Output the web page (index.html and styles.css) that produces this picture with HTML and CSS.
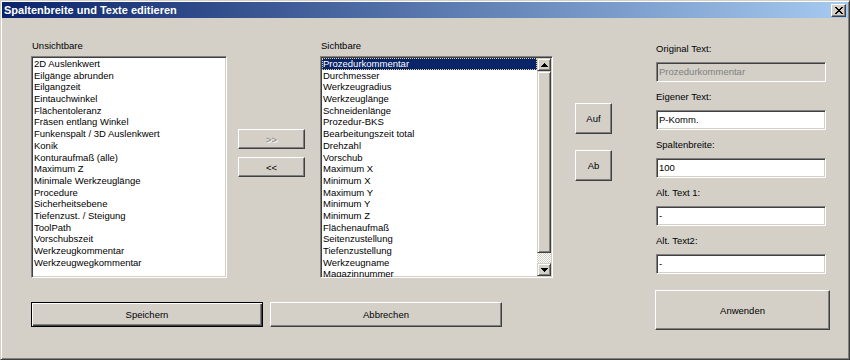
FILE: index.html
```html
<!DOCTYPE html>
<html lang="de">
<head>
<meta charset="utf-8">
<title>Spaltenbreite und Texte editieren</title>
<link rel="stylesheet" href="styles.css">
</head>
<body>
<div class="window">
  <div class="titlebar">
    <span class="title">Spaltenbreite und Texte editieren</span>
    <button class="close" aria-label="Schließen">
      <svg width="8" height="7" viewBox="0 0 8 7" shape-rendering="crispEdges">
        <path d="M0 0h2v1H0zM1 1h2v1H1zM2 2h4v1H2zM3 3h2v1H3zM2 4h4v1H2zM1 5h2v1H1zM0 6h2v1H0zM6 0h2v1H6zM5 1h2v1H5zM5 5h2v1H5zM6 6h2v1H6z" fill="#000"/>
      </svg>
    </button>
  </div>
  <div class="content">
    <div class="main">
      <div class="lists">
        <div class="col col-left">
          <div class="label">Unsichtbare</div>
          <div class="listbox">
            <ul class="items">
              <li>2D Auslenkwert</li>
              <li>Eilgänge abrunden</li>
              <li>Eilgangzeit</li>
              <li>Eintauchwinkel</li>
              <li>Flächentoleranz</li>
              <li>Fräsen entlang Winkel</li>
              <li>Funkenspalt / 3D Auslenkwert</li>
              <li>Konik</li>
              <li>Konturaufmaß (alle)</li>
              <li>Maximum Z</li>
              <li>Minimale Werkzeuglänge</li>
              <li>Procedure</li>
              <li>Sicherheitsebene</li>
              <li>Tiefenzust. / Steigung</li>
              <li>ToolPath</li>
              <li>Vorschubszeit</li>
              <li>Werkzeugkommentar</li>
              <li>Werkzeugwegkommentar</li>
            </ul>
          </div>
        </div>
        <div class="col col-arrows">
          <button class="btn btn-arrow" disabled>&gt;&gt;</button>
          <button class="btn btn-arrow">&lt;&lt;</button>
        </div>
        <div class="col col-mid">
          <div class="label">Sichtbare</div>
          <div class="listbox listbox-scroll">
            <ul class="items">
              <li class="selected">Prozedurkommentar</li>
              <li>Durchmesser</li>
              <li>Werkzeugradius</li>
              <li>Werkzeuglänge</li>
              <li>Schneidenlänge</li>
              <li>Prozedur-BKS</li>
              <li>Bearbeitungszeit total</li>
              <li>Drehzahl</li>
              <li>Vorschub</li>
              <li>Maximum X</li>
              <li>Minimum X</li>
              <li>Maximum Y</li>
              <li>Minimum Y</li>
              <li>Minimum Z</li>
              <li>Flächenaufmaß</li>
              <li>Seitenzustellung</li>
              <li>Tiefenzustellung</li>
              <li>Werkzeugname</li>
              <li>Magazinnummer</li>
            </ul>
            <div class="scrollbar">
              <div class="sb-btn">
                <svg width="7" height="4" viewBox="0 0 7 4" shape-rendering="crispEdges"><path d="M3 0h1v1H3zM2 1h3v1H2zM1 2h5v1H1zM0 3h7v1H0z" fill="#000"/></svg>
              </div>
              <div class="sb-thumb"></div>
              <div class="sb-track"></div>
              <div class="sb-btn">
                <svg width="7" height="4" viewBox="0 0 7 4" shape-rendering="crispEdges"><path d="M0 0h7v1H0zM1 1h5v1H1zM2 2h3v1H2zM3 3h1v1H3z" fill="#000"/></svg>
              </div>
            </div>
          </div>
        </div>
        <div class="col col-order">
          <button class="btn btn-order">Auf</button>
          <button class="btn btn-order">Ab</button>
        </div>
      </div>
      <div class="actions">
        <button class="btn btn-wide btn-default">Speichern</button>
        <button class="btn btn-wide">Abbrechen</button>
      </div>
    </div>
    <div class="side">
      <div class="field">
        <div class="label">Original Text:</div>
        <div class="input input-disabled">Prozedurkommentar</div>
      </div>
      <div class="field">
        <div class="label">Eigener Text:</div>
        <div class="input">P-Komm.</div>
      </div>
      <div class="field">
        <div class="label">Spaltenbreite:</div>
        <div class="input">100</div>
      </div>
      <div class="field">
        <div class="label">Alt. Text 1:</div>
        <div class="input">-</div>
      </div>
      <div class="field">
        <div class="label">Alt. Text2:</div>
        <div class="input">-</div>
      </div>
      <button class="btn btn-apply">Anwenden</button>
    </div>
  </div>
</div>
</body>
</html>
```

FILE: styles.css
```css
* { box-sizing: border-box; }

html, body {
  margin: 0;
  padding: 0;
  background: #D4D0C8;
}

body {
  font-family: "Liberation Sans", Arial, sans-serif;
  font-size: 9.5px;
  color: #000;
}

.window {
  width: 850px;
  height: 360px;
  background: #D4D0C8;
  border: 1px solid;
  border-color: #D4D0C8 #404040 #404040 #D4D0C8;
  box-shadow: inset 1px 1px #fff, inset -1px -1px #808080;
  padding: 1px;
}

.titlebar {
  height: 16px;
  background: linear-gradient(to right, #0A246A, #A6CAF0);
  display: flex;
  align-items: center;
  justify-content: space-between;
  padding-left: 2px;
  padding-right: 2px;
}

.title {
  color: #fff;
  font-weight: bold;
  font-size: 11px;
  line-height: 16px;
}

.close {
  width: 15px;
  height: 13px;
  padding: 0;
  margin: 0;
  background: #D4D0C8;
  border: 1px solid;
  border-color: #fff #404040 #404040 #fff;
  box-shadow: inset -1px -1px #808080;
  display: flex;
  align-items: center;
  justify-content: center;
}

.close svg { display: block; }

.content {
  display: flex;
  align-items: flex-start;
  padding-left: 29px;
}

.main {
  display: flex;
  flex-direction: column;
}

.lists {
  display: flex;
  align-items: flex-start;
}

.col {
  display: flex;
  flex-direction: column;
}

.label {
  line-height: 12px;
  height: 12px;
  white-space: nowrap;
}

.col-left {
  width: 196px;
  padding-top: 22px;
}

.col-left .label,
.col-mid .label {
  margin-bottom: 4px;
  padding-left: 1px;
}

.listbox {
  height: 222px;
  background: #fff;
  border: 1px solid;
  border-color: #808080 #fff #fff #808080;
  box-shadow: inset 1px 1px #404040, inset -1px -1px #D4D0C8;
  padding: 1px;
  overflow: hidden;
}

.items {
  list-style: none;
  margin: 0;
  padding: 0;
  flex: 1;
  min-width: 0;
}

.items li {
  height: 11.7px;
  line-height: 11.7px;
  padding-left: 1px;
  white-space: nowrap;
  overflow: hidden;
}

.items li.selected {
  background: #0A246A;
  color: #fff;
  outline: 1px dotted #E8D48A;
  outline-offset: -1px;
}

.col-arrows {
  width: 67px;
  margin-left: 11px;
  padding-top: 111px;
  gap: 8px;
}

.col-mid {
  width: 233px;
  margin-left: 15px;
  padding-top: 22px;
}

.listbox-scroll {
  display: flex;
}

.scrollbar {
  width: 14px;
  display: flex;
  flex-direction: column;
  flex: none;
}

.sb-btn {
  height: 13px;
  flex: none;
  background: #D4D0C8;
  border: 1px solid;
  border-color: #D4D0C8 #404040 #404040 #D4D0C8;
  box-shadow: inset 1px 1px #fff, inset -1px -1px #808080;
  display: flex;
  align-items: center;
  justify-content: center;
}

.sb-btn svg { display: block; }

.sb-thumb {
  height: 182px;
  flex: none;
  background: #D4D0C8;
  border: 1px solid;
  border-color: #D4D0C8 #404040 #404040 #D4D0C8;
  box-shadow: inset 1px 1px #fff, inset -1px -1px #808080;
}

.sb-track {
  flex: 1;
  background: repeating-conic-gradient(#fff 0 25%, #D4D0C8 0 50%) 0 0 / 2px 2px;
}

.col-order {
  width: 37px;
  margin-left: 22px;
  padding-top: 85px;
  gap: 16px;
}

.btn {
  font-family: "Liberation Sans", Arial, sans-serif;
  font-size: 9.5px;
  color: #000;
  background: #D4D0C8;
  border: 1px solid;
  border-color: #fff #404040 #404040 #fff;
  box-shadow: inset -1px -1px #808080;
  padding: 0;
  margin: 0;
  display: flex;
  align-items: center;
  justify-content: center;
}

.btn:disabled {
  color: #808080;
  text-shadow: 1px 1px #fff;
}

.btn-arrow {
  width: 67px;
  height: 20px;
}

.btn-order {
  width: 37px;
  height: 31px;
}

.actions {
  display: flex;
  gap: 7px;
  margin-top: 24px;
}

.btn-wide {
  width: 232px;
  height: 25px;
}

.btn-default {
  border-color: #000;
  box-shadow: inset 1px 1px #fff, inset -1px -1px #404040, inset -2px -2px #808080;
}

.side {
  width: 176px;
  margin-left: 43px;
  padding-top: 25px;
  display: flex;
  flex-direction: column;
  gap: 9px;
}

.field {
  display: flex;
  flex-direction: column;
}

.field .label {
  margin-bottom: 7px;
  padding-left: 1px;
}

.input {
  width: 170px;
  height: 20px;
  margin-left: 1px;
  background: #fff;
  border: 1px solid;
  border-color: #808080 #fff #fff #808080;
  box-shadow: inset 1px 1px #404040, inset -1px -1px #D4D0C8;
  padding-left: 2px;
  line-height: 18px;
  white-space: nowrap;
}

.input-disabled {
  background: #D4D0C8;
  color: #808080;
}

.btn-apply {
  width: 175px;
  height: 40px;
  margin-top: 7px;
}
```
